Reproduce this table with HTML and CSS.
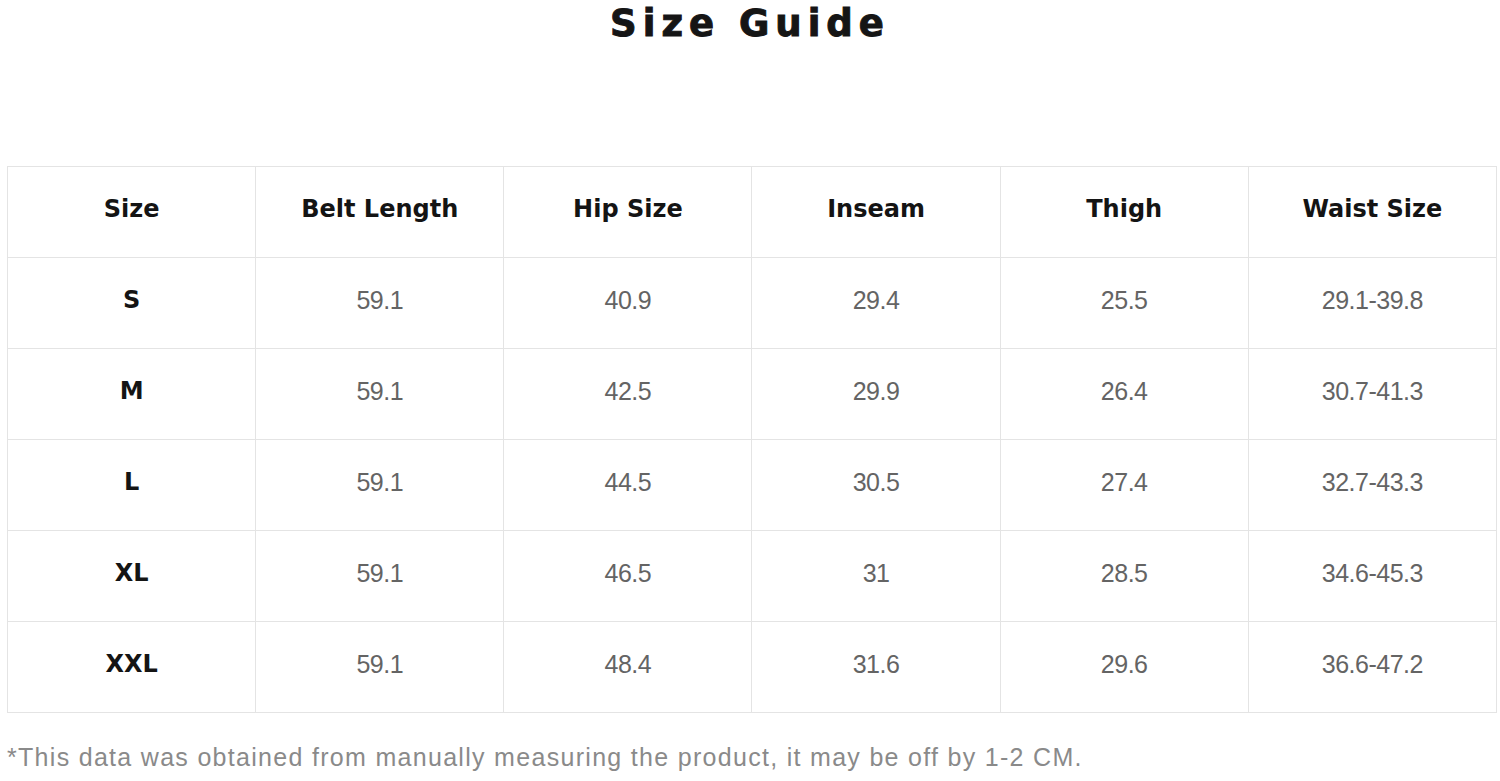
FILE: index.html
```html
<!DOCTYPE html>
<html lang="en">
<head>
<meta charset="utf-8">
<title>Size Guide</title>
<link rel="stylesheet" href="styles.css">
</head>
<body>
<h1 class="title">Size Guide</h1>
<table class="size-table">
  <thead>
    <tr>
      <th>Size</th>
      <th>Belt Length</th>
      <th>Hip Size</th>
      <th>Inseam</th>
      <th>Thigh</th>
      <th>Waist Size</th>
    </tr>
  </thead>
  <tbody>
    <tr><th>S</th><td>59.1</td><td>40.9</td><td>29.4</td><td>25.5</td><td>29.1-39.8</td></tr>
    <tr><th>M</th><td>59.1</td><td>42.5</td><td>29.9</td><td>26.4</td><td>30.7-41.3</td></tr>
    <tr><th>L</th><td>59.1</td><td>44.5</td><td>30.5</td><td>27.4</td><td>32.7-43.3</td></tr>
    <tr><th>XL</th><td>59.1</td><td>46.5</td><td>31</td><td>28.5</td><td>34.6-45.3</td></tr>
    <tr><th>XXL</th><td>59.1</td><td>48.4</td><td>31.6</td><td>29.6</td><td>36.6-47.2</td></tr>
  </tbody>
</table>
<p class="note">*This data was obtained from manually measuring the product, it may be off by 1-2 CM.</p>
</body>
</html>
```
FILE: styles.css
```css
html, body {
  margin: 0;
  padding: 0;
  background: #ffffff;
}

body {
  width: 1500px;
  height: 781px;
  overflow: hidden;
}

.title {
  margin: 3px 0 0 0;
  height: 42px;
  line-height: 42px;
  text-align: center;
  font-family: "DejaVu Sans", sans-serif;
  font-weight: bold;
  font-size: 37px;
  letter-spacing: 6px;
  -webkit-text-stroke: 1px #151515;
  color: #151515;
}

.size-table {
  margin: 121px 0 0 7px;
  width: 1490px;
  border-collapse: collapse;
  table-layout: fixed;
}

.size-table th,
.size-table td {
  border: 1px solid #e4e4e4;
  height: 84px;
  padding: 0 0 6px 0;
  text-align: center;
  vertical-align: middle;
}

.size-table th {
  font-family: "DejaVu Sans", sans-serif;
  font-weight: bold;
  font-size: 24px;
  color: #141414;
}

.size-table td {
  font-family: "Liberation Sans", Arial, sans-serif;
  font-size: 25px;
  letter-spacing: -0.5px;
  color: #646464;
}

.note {
  margin: 30px 0 0 7px;
  line-height: 29px;
  font-family: "Liberation Sans", Arial, sans-serif;
  font-size: 25px;
  letter-spacing: 1.3px;
  color: #8a8a8a;
}
```
